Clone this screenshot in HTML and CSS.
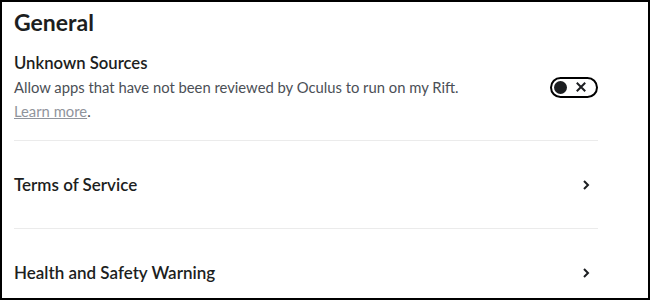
FILE: index.html
```html
<!DOCTYPE html>
<html>
<head>
<meta charset="utf-8">
<link rel="stylesheet" href="styles.css">
</head>
<body>
<div class="frame">
  <h1 class="title">General</h1>
  <section class="setting">
    <h2 class="setting-name">Unknown Sources</h2>
    <div class="desc-line">
      <p class="desc">Allow apps that have not been reviewed by Oculus to run on my Rift.</p>
      <div class="toggle">
        <span class="knob"></span>
        <svg class="x" width="10" height="10" viewBox="0 0 10 10"><path d="M1.5 1.5L8.5 8.5M8.5 1.5L1.5 8.5" stroke="#1c1e21" stroke-width="2" stroke-linecap="square"/></svg>
      </div>
    </div>
    <p class="desc learn"><a class="link">Learn more</a>.</p>
  </section>
  <div class="row">
    <span class="row-label">Terms of Service</span>
    <svg class="chev" width="8" height="12" viewBox="0 0 8 12"><path d="M2 2L6 6L2 10" stroke="#1c1e21" stroke-width="2" fill="none"/></svg>
  </div>
  <div class="row">
    <span class="row-label">Health and Safety Warning</span>
    <svg class="chev" width="8" height="12" viewBox="0 0 8 12"><path d="M2 2L6 6L2 10" stroke="#1c1e21" stroke-width="2" fill="none"/></svg>
  </div>
</div>
</body>
</html>
```
FILE: styles.css
```css
html, body { margin: 0; padding: 0; background: #fff; }
body { width: 650px; height: 300px; overflow: hidden; font-family: "Lato", "Open Sans", sans-serif; color: #1c1e21; }
.frame {
  box-sizing: border-box;
  width: 650px; height: 300px;
  border: 2px solid #000;
  padding: 0 50px 0 12px;
  overflow: hidden;
}
.title { margin: 6px 0 0; font-size: 23px; font-weight: 700; line-height: 28px; }
.setting { padding: 16px 0 18px; border-bottom: 1px solid #ebebeb; }
.setting-name { margin: 0; font-size: 16.7px; font-weight: 600; line-height: 22px; }
.desc-line { display: flex; align-items: center; justify-content: space-between; margin-top: 2px; }
.desc { margin: 0; font-size: 14.8px; line-height: 22px; color: #4b4f56; }
.learn { margin-top: 2px; }
.link { color: #90949c; text-decoration: underline; }
.toggle {
  box-sizing: border-box;
  width: 48px; height: 21px; border: 2px solid #000; border-radius: 11px;
  display: flex; align-items: center; justify-content: space-between;
  padding: 0 10px 0 2px;
}
.knob { width: 13px; height: 13px; border-radius: 50%; background: #1c1e21; }
.row { display: flex; align-items: center; justify-content: space-between; height: 87px; border-bottom: 1px solid #ebebeb; }
.row-label { font-size: 17px; font-weight: 600; }
.chev { margin-right: 8px; }
```
